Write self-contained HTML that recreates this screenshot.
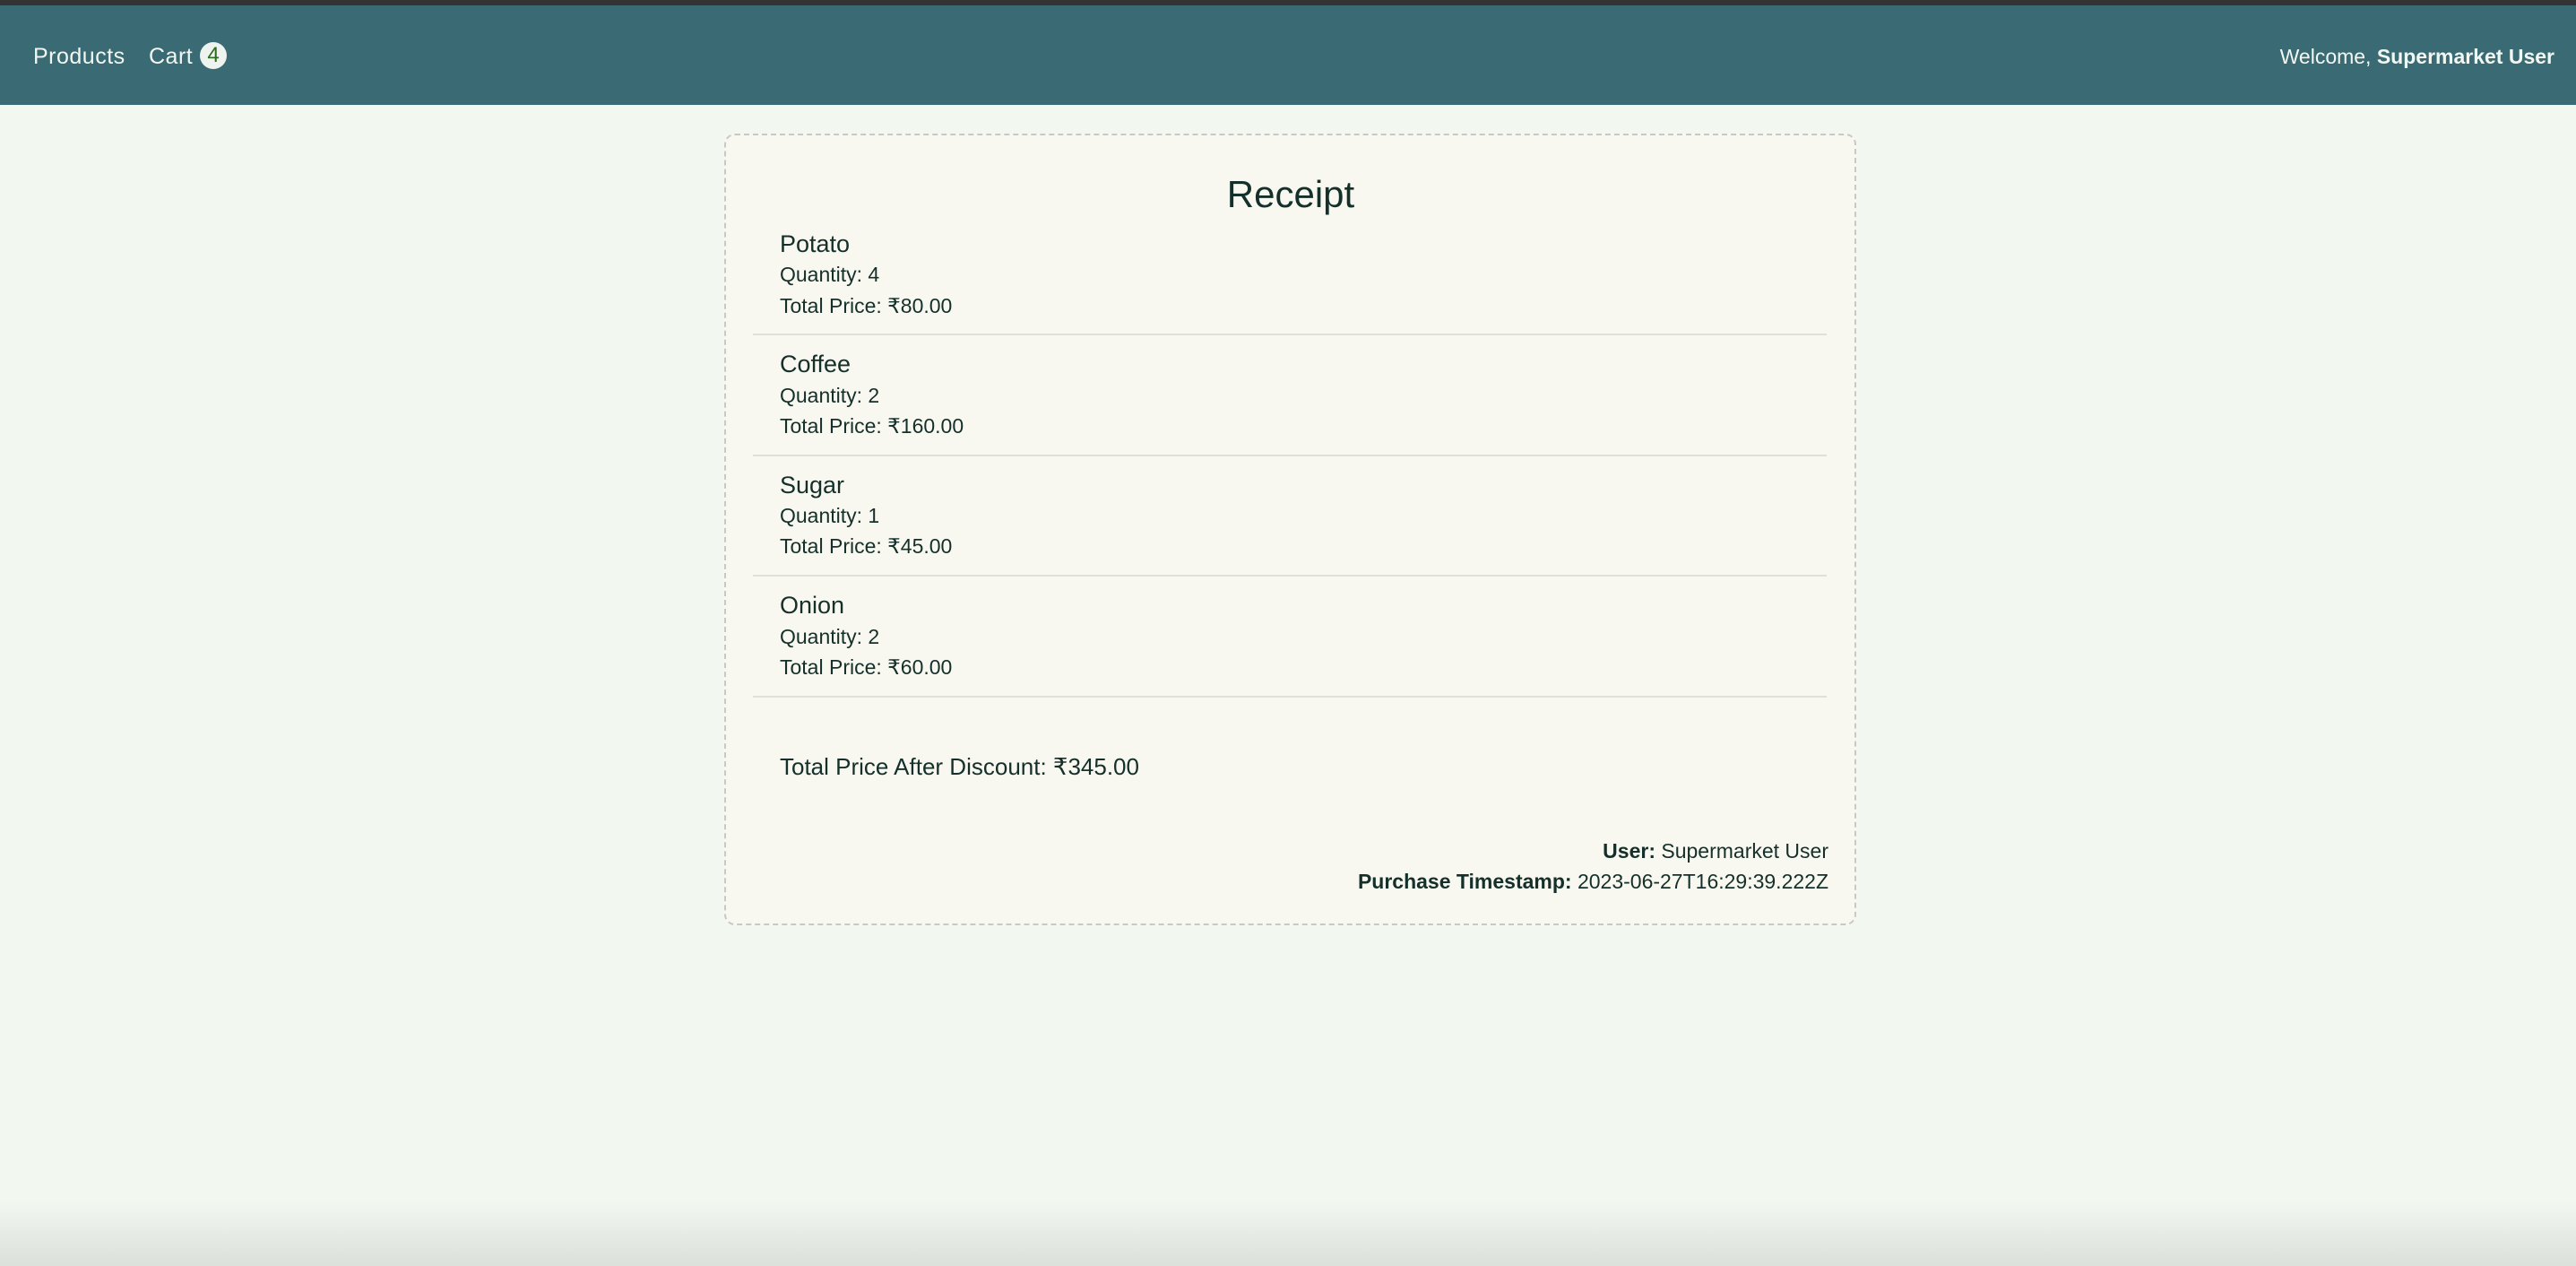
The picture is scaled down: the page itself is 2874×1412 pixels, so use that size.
<!DOCTYPE html>
<html><head><meta charset="utf-8"><style>
*{margin:0;padding:0;box-sizing:border-box}
html,body{width:2874px;height:1412px;overflow:hidden}
body{background:#f2f7f0;font-family:"Liberation Sans","DejaVu Sans",sans-serif;color:#15302b;position:relative}
.top{position:absolute;left:0;top:0;width:2874px;height:6px;background:#333}
.nav{position:absolute;left:0;top:6px;width:2874px;height:111px;background:#3a6b74;color:#f3f7f2}
.a{position:absolute;white-space:nowrap;line-height:40px}
.badge{position:absolute;left:223px;top:41px;width:30px;height:30px;border-radius:50%;background:#eef3f0;color:#2d6a1e;font-size:24px;line-height:30px;text-align:center}
.card{position:absolute;left:808px;top:149px;width:1263px;height:883px;border:2px dashed #c8c8c6;border-radius:12px;background:#f8f8f0}
.hr{position:absolute;left:840px;width:1198px;height:2px;background:#e0e0d6}
.b{position:absolute;white-space:nowrap;line-height:34px}
.n{font-size:27px}
.s{font-size:23px}
.shadow{position:absolute;left:0;top:1340px;width:2874px;height:72px;background:linear-gradient(#f2f7f000,#dbe0da)}
</style></head><body>
<div class="top"></div>
<div class="nav">
<div class="a" style="left:37px;top:37px;font-size:25px;letter-spacing:0.5px">Products</div>
<div class="a" style="left:166px;top:37px;font-size:25px;letter-spacing:0.5px">Cart</div>
<div class="badge">4</div>
<div class="a" style="right:24px;top:37px;font-size:23px">Welcome, <b>Supermarket User</b></div>
</div>
<div class="card"></div>
<div class="b" style="left:0;width:2880px;text-align:center;top:192px;font-size:42px;line-height:50px">Receipt</div>

<div class="b n" style="left:870px;top:255px">Potato</div>
<div class="b s" style="left:870px;top:289px">Quantity: 4</div>
<div class="b s" style="left:870px;top:324px">Total Price: ₹80.00</div>
<div class="hr" style="top:372px"></div>

<div class="b n" style="left:870px;top:389px">Coffee</div>
<div class="b s" style="left:870px;top:424px">Quantity: 2</div>
<div class="b s" style="left:870px;top:458px">Total Price: ₹160.00</div>
<div class="hr" style="top:507px"></div>

<div class="b n" style="left:870px;top:524px">Sugar</div>
<div class="b s" style="left:870px;top:558px">Quantity: 1</div>
<div class="b s" style="left:870px;top:592px">Total Price: ₹45.00</div>
<div class="hr" style="top:641px"></div>

<div class="b n" style="left:870px;top:658px">Onion</div>
<div class="b s" style="left:870px;top:693px">Quantity: 2</div>
<div class="b s" style="left:870px;top:727px">Total Price: ₹60.00</div>
<div class="hr" style="top:776px"></div>

<div class="b" style="left:870px;top:838px;font-size:26px">Total Price After Discount: ₹345.00</div>

<div class="b s" style="right:834px;top:932px"><b>User:</b> Supermarket User</div>
<div class="b s" style="right:834px;top:966px"><b>Purchase Timestamp:</b> 2023-06-27T16:29:39.222Z</div>
<div class="shadow"></div>
</body></html>
